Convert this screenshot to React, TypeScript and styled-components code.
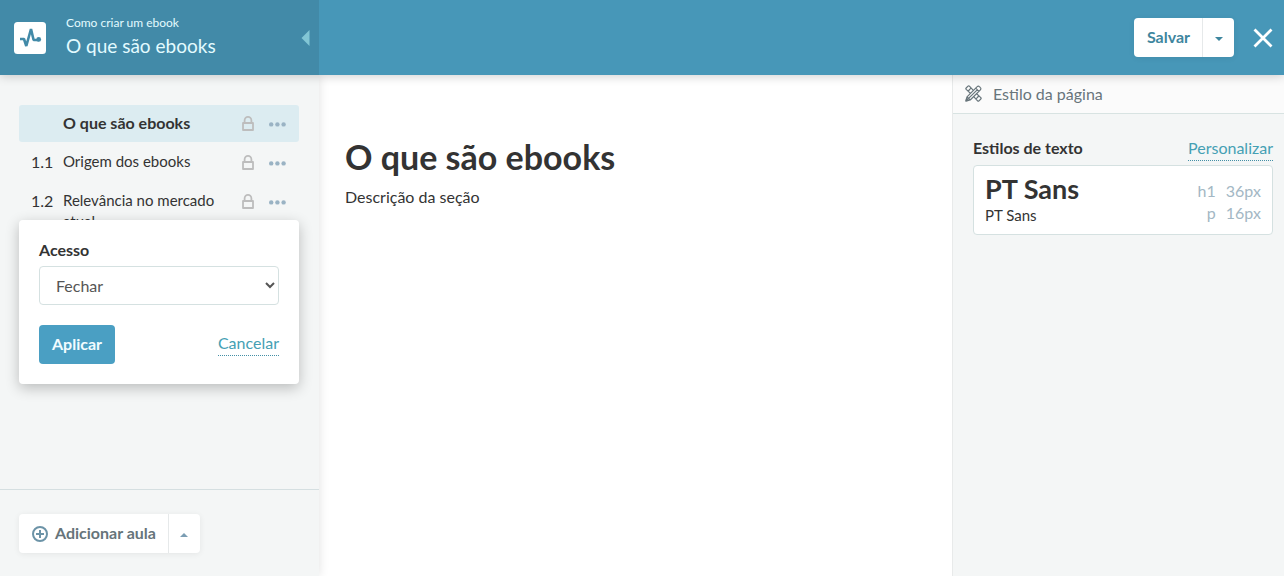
import React from "react";
import styled, { createGlobalStyle } from "styled-components";

const GlobalStyle = createGlobalStyle`
  *, *::before, *::after { box-sizing: border-box; }
  body {
    margin: 0;
    background: #fff;
    color: #333;
    font-family: Lato, "Open Sans", sans-serif;
    font-size: 16px;
    line-height: 21px;
  }
  button, select { font: inherit; color: inherit; cursor: pointer; }
  h1, h2, p, ol { margin: 0; padding: 0; }
`;

const Page = styled.div`
  display: flex;
  flex-direction: column;
  min-height: 100vh;
`;

const TopBar = styled.header`
  position: relative;
  z-index: 3;
  display: flex;
  align-items: stretch;
  height: 75px;
  background: #4797b8;
  box-shadow: 0 1px 10px rgba(0, 0, 0, 0.2);
`;

const Brand = styled.div`
  display: flex;
  align-items: center;
  width: 319px;
  padding: 0 9px 0 14px;
  background: #428aa8;
`;

const Logo = styled.svg`
  width: 32px;
  height: 32px;
  margin-right: 20px;
`;

const Titles = styled.div`
  flex: 1;
  color: #e2fbff;
`;

const CourseName = styled.p`
  font-size: 12px;
  line-height: 16px;
`;

const SectionName = styled.p`
  font-size: 19px;
  line-height: 30px;
`;

const IconButton = styled.button`
  display: flex;
  align-items: center;
  justify-content: center;
  padding: 0;
  border: 0;
  background: none;
`;

const TopActions = styled.div`
  display: flex;
  align-items: center;
  gap: 19px;
  margin-left: auto;
  padding-right: 11px;
`;

const SplitButton = styled.div`
  display: inline-flex;
  height: 39px;
  border-radius: 4px;
  background: #fff;
  box-shadow: 0 1px 6px rgba(0, 0, 0, 0.07);
`;

const SplitMain = styled.button<{ $tone: string }>`
  display: flex;
  align-items: center;
  gap: 7px;
  padding: 0 12px 0 13px;
  border: 0;
  background: none;
  color: ${(p) => p.$tone};
  font-weight: 700;
`;

const ButtonText = styled.span`
  padding-bottom: 3px;
`;

const SplitArrow = styled.button`
  display: flex;
  align-items: center;
  justify-content: center;
  width: 32px;
  padding: 2px 0 0;
  border: 0;
  border-left: 1px solid #e6e9ea;
  background: none;
`;

const Body = styled.div`
  display: flex;
  flex: 1;
`;

const Sidebar = styled.nav`
  position: relative;
  z-index: 2;
  display: flex;
  flex-direction: column;
  width: 319px;
  background: #f4f6f6;
  box-shadow: 0 0 10px rgba(0, 0, 0, 0.12);
`;

const Lessons = styled.ol`
  display: flex;
  flex: 1;
  flex-direction: column;
  gap: 2px;
  padding: 30px 20px 20px 19px;
  list-style: none;
`;

const Lesson = styled.li<{ $active?: boolean }>`
  position: relative;
  display: flex;
  align-items: flex-start;
  padding: 7px 13px 7px 12px;
  border-radius: 3px;
  background: ${(p) => (p.$active ? "#dcecf1" : "transparent")};
`;

const LessonNumber = styled.span`
  width: 32px;
`;

const LessonName = styled.span<{ $active?: boolean }>`
  flex: 1;
  font-size: ${(p) => (p.$active ? 16 : 15)}px;
  font-weight: ${(p) => (p.$active ? 700 : 400)};
`;

const LessonActions = styled.span`
  display: flex;
  gap: 15px;
  height: 23px;
  padding-left: 16px;
`;

const Popover = styled.form`
  position: absolute;
  z-index: 1;
  top: 37px;
  left: 0;
  right: 0;
  padding: 20px;
  border-radius: 4px;
  background: #fff;
  box-shadow: 0 4px 14px rgba(0, 0, 0, 0.24);
`;

const FieldLabel = styled.label`
  display: block;
  height: 26px;
  font-weight: 700;
  line-height: 19px;
`;

const Select = styled.select`
  display: block;
  width: 100%;
  height: 39px;
  padding: 0 0 0 12px;
  border: 1px solid #d5e1e1;
  border-radius: 4px;
  background: #fff;
  color: #555;
`;

const FormActions = styled.div`
  display: flex;
  align-items: center;
  justify-content: space-between;
  margin-top: 20px;
`;

const PrimaryButton = styled.button`
  height: 39px;
  padding: 0 13px 3px;
  border: 0;
  border-radius: 4px;
  background: #4a9fc3;
  color: #f2fcff;
  font-weight: 700;
`;

const DottedLink = styled.a`
  padding-bottom: 2px;
  border-bottom: 1px dotted #438fa6;
  color: #45a0b4;
  line-height: 20px;
  text-decoration: none;
`;

const SidebarFooter = styled.div`
  padding: 24px 19px 23px;
  border-top: 1px solid #d5dfe1;
`;

const Editor = styled.main`
  flex: 1;
  padding: 60px 26px;
`;

const EditorTitle = styled.h1`
  font-size: 34px;
  line-height: 44px;
`;

const EditorText = styled.p`
  margin-top: 8px;
  line-height: 20px;
`;

const StylePanel = styled.aside`
  width: 332px;
  border-left: 1px solid #e8eaea;
  background: #f4f6f6;
`;

const PanelHeader = styled.h2`
  display: flex;
  align-items: center;
  gap: 11px;
  height: 39px;
  padding: 0 12px 2px;
  border-bottom: 1px solid #d8e3e2;
  background: #fbfbfb;
  color: #68757b;
  font-size: 16px;
  font-weight: 400;
`;

const PanelSection = styled.section`
  padding: 24px 11px 24px 20px;
`;

const PanelRow = styled.div`
  display: flex;
  align-items: flex-start;
  justify-content: space-between;
  margin-bottom: 4px;
`;

const PanelTitle = styled.strong`
  line-height: 20px;
`;

const StyleCard = styled.button`
  display: flex;
  align-items: center;
  justify-content: space-between;
  width: 100%;
  height: 70px;
  padding: 0 11px 3px;
  border: 1px solid #d5e1e1;
  border-radius: 4px;
  background: #fff;
  text-align: left;
`;

const Sample = styled.span<{ $heading?: boolean }>`
  display: block;
  font-size: ${(p) => (p.$heading ? 27 : 15)}px;
  font-weight: ${(p) => (p.$heading ? 700 : 400)};
  line-height: ${(p) => (p.$heading ? 32 : 20)}px;
`;

const Sizes = styled.span`
  display: grid;
  grid-template-columns: auto auto;
  column-gap: 10px;
  padding-top: 6px;
  color: #a3b7c4;
  line-height: 22px;
  text-align: right;
`;

const Caret = ({ up, color }: { up?: boolean; color: string }) => (
  <svg width="8" height="4" viewBox="0 0 8 4" aria-hidden="true">
    <path d={up ? "M0 4 4 0l4 4z" : "M0 0h8L4 4z"} fill={color} />
  </svg>
);

const LockIcon = () => (
  <svg width="12" height="15" viewBox="0 0 12 15" fill="none" stroke="#bdbdbd" strokeWidth="1.8" aria-hidden="true">
    <path d="M1 7h10v7H1zM2.6 7V4.4a3.4 3.5 0 0 1 6.8 0V7" strokeLinejoin="round" />
  </svg>
);

const DotsIcon = () => (
  <svg width="17" height="6" viewBox="0 0 17 6" fill="#9ab3c4" aria-hidden="true">
    <circle cx="2.2" cy="3.4" r="2.2" />
    <circle cx="8.4" cy="3.4" r="2.2" />
    <circle cx="14.6" cy="3.4" r="2.2" />
  </svg>
);

const ToolsIcon = () => (
  <svg width="17" height="17" viewBox="0 0 17 17" fill="none" stroke="#68757b" strokeWidth="1.2" strokeLinejoin="round" aria-hidden="true">
    <path d="M6.2 9 1.2 4.4a1 1 0 0 1 0-1.4L3 1.2a1 1 0 0 1 1.4 0L9 6.2M10.8 8l5 4.6a1 1 0 0 1 0 1.4L14 15.8a1 1 0 0 1-1.4 0L8 10.8M3.2 6l1.5-1.5M6 3.2 4.5 4.7M11 13.8l1.5-1.5M13.8 11l-1.5 1.5" />
    <path d="m1 16 1-4.2L12.2 1.6a1.5 1.5 0 0 1 2.2 0l1 1a1.5 1.5 0 0 1 0 2.2L5.2 15zM2 11.8 5.2 15M10.7 3.1l3.2 3.2M3.8 13.2l8.4-8.4" fill="#fbfbfb" />
    <path d="m1 16 .6-2.6 2 2z" fill="#68757b" />
  </svg>
);

const lessons = [
  { number: "", name: "O que são ebooks" },
  { number: "1.1", name: "Origem dos ebooks" },
  { number: "1.2", name: "Relevância no mercado atual" },
];

export default function App() {
  return (
    <Page>
      <GlobalStyle />
      <TopBar>
        <Brand>
          <Logo viewBox="0 0 32 32" aria-hidden="true">
            <rect width="32" height="32" rx="3.5" fill="#fff" />
            <path d="M6 17h4l2.3 7L17 7l2.6 11H25" fill="none" stroke="#428aa8" strokeWidth="2.6" strokeLinejoin="bevel" />
            <circle cx="24.7" cy="17.4" r="2.4" fill="#428aa8" />
          </Logo>
          <Titles>
            <CourseName>Como criar um ebook</CourseName>
            <SectionName>O que são ebooks</SectionName>
          </Titles>
          <IconButton aria-label="Recolher menu">
            <svg width="9" height="16" viewBox="0 0 9 16" aria-hidden="true">
              <path d="M8.5 0v16L.5 8z" fill="#82c6d5" />
            </svg>
          </IconButton>
        </Brand>
        <TopActions>
          <SplitButton>
            <SplitMain $tone="#3e869e">
              <ButtonText>Salvar</ButtonText>
            </SplitMain>
            <SplitArrow aria-label="Mais opções de salvar">
              <Caret color="#3e869e" />
            </SplitArrow>
          </SplitButton>
          <IconButton aria-label="Sair">
            <svg width="20" height="20" viewBox="0 0 20 20" stroke="#fff" strokeWidth="2.8" aria-hidden="true">
              <path d="m1.5 1.5 17 17M18.5 1.5l-17 17" />
            </svg>
          </IconButton>
        </TopActions>
      </TopBar>
      <Body>
        <Sidebar>
          <Lessons>
            {lessons.map((lesson, i) => (
              <Lesson key={lesson.name} $active={i === 0}>
                <LessonNumber>{lesson.number}</LessonNumber>
                <LessonName $active={i === 0}>{lesson.name}</LessonName>
                <LessonActions>
                  <IconButton aria-label="Acesso">
                    <LockIcon />
                  </IconButton>
                  <IconButton aria-label="Opções">
                    <DotsIcon />
                  </IconButton>
                </LessonActions>
                {i === 2 && (
                  <Popover onSubmit={(e) => e.preventDefault()}>
                    <FieldLabel htmlFor="access">Acesso</FieldLabel>
                    <Select id="access" defaultValue="Fechar">
                      <option>Fechar</option>
                      <option>Abrir</option>
                    </Select>
                    <FormActions>
                      <PrimaryButton type="submit">Aplicar</PrimaryButton>
                      <DottedLink href="#cancelar">Cancelar</DottedLink>
                    </FormActions>
                  </Popover>
                )}
              </Lesson>
            ))}
          </Lessons>
          <SidebarFooter>
            <SplitButton>
              <SplitMain $tone="#66747a">
                <svg width="16" height="16" viewBox="0 0 16 16" fill="none" stroke="#6c93a7" strokeWidth="2" aria-hidden="true">
                  <circle cx="8" cy="8" r="7" />
                  <path d="M8 4v8M4 8h8" />
                </svg>
                <ButtonText>Adicionar aula</ButtonText>
              </SplitMain>
              <SplitArrow aria-label="Mais opções de aula">
                <Caret up color="#7b9db3" />
              </SplitArrow>
            </SplitButton>
          </SidebarFooter>
        </Sidebar>
        <Editor>
          <EditorTitle>O que são ebooks</EditorTitle>
          <EditorText>Descrição da seção</EditorText>
        </Editor>
        <StylePanel>
          <PanelHeader>
            <ToolsIcon />
            Estilo da página
          </PanelHeader>
          <PanelSection>
            <PanelRow>
              <PanelTitle>Estilos de texto</PanelTitle>
              <DottedLink href="#personalizar">Personalizar</DottedLink>
            </PanelRow>
            <StyleCard>
              <span>
                <Sample $heading>PT Sans</Sample>
                <Sample>PT Sans</Sample>
              </span>
              <Sizes>
                <span>h1</span>
                <span>36px</span>
                <span>p</span>
                <span>16px</span>
              </Sizes>
            </StyleCard>
          </PanelSection>
        </StylePanel>
      </Body>
    </Page>
  );
}
